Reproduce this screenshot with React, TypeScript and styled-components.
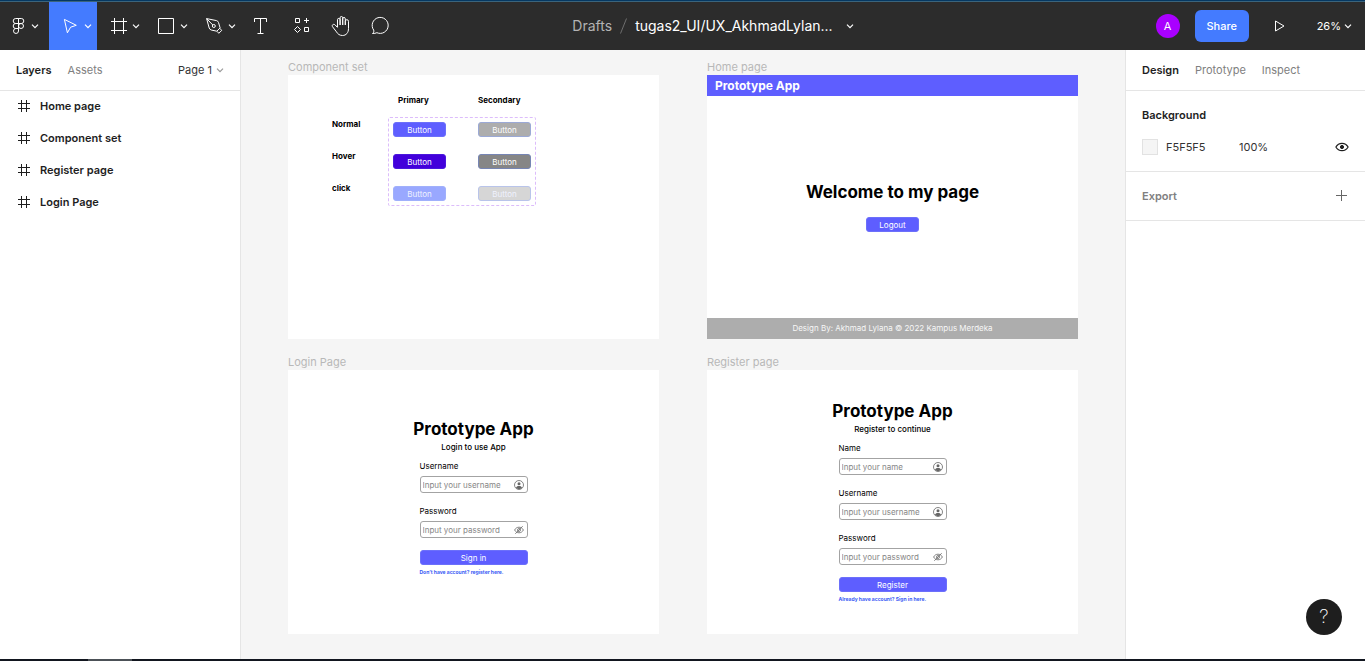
import React from "react";
import styled, { createGlobalStyle, css } from "styled-components";

const GlobalStyle = createGlobalStyle`
  *, *::before, *::after { box-sizing: border-box; }
  body { margin: 0; font-family: Inter, "Liberation Sans", sans-serif; font-size: 11px; line-height: 16px; color: #1e1e1e; }
  button, input { font: inherit; color: inherit; }
  h1, h2, h3, p, ul { margin: 0; padding: 0; }
  svg { display: block; flex: none; }
`;

/* ---------- shell ---------- */

const Shell = styled.div`
  display: flex;
  flex-direction: column;
  min-height: 100vh;
  background: #fff;
`;

const WindowEdge = styled.div`
  height: 2px;
  background: #053862;
  border-bottom: 1px solid #3b647c;
`;

const Taskbar = styled.div`
  height: 2px;
  padding-left: 88px;
  background: #12161f;
`;

const TaskbarItem = styled.div`
  width: 44px;
  height: 2px;
  background: #4c5157;
`;

const Workspace = styled.div`
  flex: 1;
  display: flex;
  align-items: stretch;
`;

/* ---------- toolbar ---------- */

const Toolbar = styled.header`
  display: flex;
  height: 48px;
  background: #2c2c2c;
  color: #fff;
`;

const Tools = styled.nav`
  display: flex;
  flex: none;
`;

const bareButton = css`
  display: flex;
  align-items: center;
  margin: 0;
  padding: 0;
  border: 0;
  background: none;
`;

const Tool = styled.button<{ $kind?: "menu" | "single" | "main"; $active?: boolean }>`
  ${bareButton}
  gap: 1px;
  width: ${(p) => (p.$kind === "single" ? 40 : p.$kind === "main" ? 49 : 48)}px;
  padding-left: ${(p) => (p.$kind === "single" ? 8 : p.$kind === "main" ? 6 : 10)}px;
  background: ${(p) => (p.$active ? "#447bff" : "transparent")};
`;

const FileTitle = styled.div`
  flex: 1;
  display: flex;
  align-items: center;
  justify-content: center;
  gap: 8px;
  min-width: 0;
  font-size: 14px;
  white-space: nowrap;
`;

const FolderLink = styled.a`
  color: #b3b3b3;
  text-decoration: none;
`;

const FileName = styled.button`
  ${bareButton}
  gap: 13px;
`;

const Actions = styled.div`
  display: flex;
  align-items: center;
  justify-content: flex-end;
  flex: none;
  width: 340px;
  padding-right: 13px;
`;

const Avatar = styled.span`
  display: grid;
  place-items: center;
  width: 24px;
  height: 24px;
  margin-right: 15px;
  border-radius: 50%;
  background: #a900ff;
`;

const ShareButton = styled.button`
  width: 54px;
  height: 32px;
  padding: 0;
  border: 0;
  border-radius: 6px;
  background: #447bff;
  font-weight: 500;
`;

const PlayButton = styled.button`
  ${bareButton}
  margin: 0 31px 0 25px;
`;

const ZoomButton = styled.button`
  ${bareButton}
  gap: 3px;
`;

/* ---------- side panels ---------- */

const LeftPanel = styled.aside`
  flex: none;
  width: 241px;
  border-right: 1px solid #e5e5e5;
`;

const RightPanel = styled.aside`
  flex: none;
  width: 240px;
  border-left: 1px solid #e5e5e5;
`;

const PanelTabs = styled.div`
  display: flex;
  align-items: center;
  gap: 16px;
  height: 40px;
  padding: 0 16px;
  box-shadow: 0 1px 0 #e5e5e5;
`;

const Tab = styled.button<{ $active?: boolean }>`
  ${bareButton}
  color: ${(p) => (p.$active ? "#1e1e1e" : "#808080")};
  font-weight: ${(p) => (p.$active ? 600 : 400)};
`;

const PagePicker = styled.button`
  ${bareButton}
  gap: 4px;
  margin-left: auto;
  color: #333;
`;

const LayerList = styled.ul`
  list-style: none;
`;

const Layer = styled.li`
  display: flex;
  align-items: center;
  gap: 10px;
  height: 32px;
  padding-left: 18px;
  font-weight: 600;
`;

const Section = styled.section`
  padding: 8px 16px;
  border-bottom: 1px solid #e5e5e5;
`;

const DesignSections = styled.div`
  padding-top: 1px;
`;

const Row = styled.div`
  display: flex;
  align-items: center;
  height: 32px;
`;

const SectionTitle = styled.h2<{ $muted?: boolean }>`
  flex: 1;
  font-size: 11px;
  font-weight: 600;
  color: ${(p) => (p.$muted ? "#808080" : "#1e1e1e")};
`;

const Swatch = styled.button`
  width: 16px;
  height: 16px;
  margin-right: 8px;
  padding: 0;
  border: 1px solid #e2e2e2;
  background: #f5f5f5;
`;

const ValueInput = styled.input<{ $w: number }>`
  width: ${(p) => p.$w}px;
  padding: 0;
  border: 0;
  outline: 0;
  background: none;
  color: #333;
`;

const IconButton = styled.button`
  ${bareButton}
  margin-left: auto;
`;

/* ---------- canvas ---------- */

const Canvas = styled.main`
  flex: 1;
  display: grid;
  grid-template-columns: 371px 371px;
  justify-content: center;
  align-content: start;
  column-gap: 48px;
  row-gap: 16px;
  padding: 10px 0 25px;
  background: #f5f5f5;
`;

const Artboard = styled.section`
  display: flex;
  flex-direction: column;
`;

const ArtboardName = styled.h2`
  font-size: 11px;
  line-height: 15px;
  font-weight: 400;
  color: #b8b8b8;
`;

const Sheet = styled.div`
  display: flex;
  flex-direction: column;
  height: 264px;
  background: #fff;
  color: #000;
`;

const VariantSheet = styled(Sheet)`
  display: grid;
  grid-template-columns: 56px 148px;
  grid-template-rows: 12px auto;
  align-content: start;
  row-gap: 11px;
  padding: 19px 0 0 44px;
  font-size: 8px;
  line-height: 12px;
  font-weight: 700;
`;

const VariantColumns = styled.div`
  grid-column: 2;
  display: grid;
  grid-template-columns: 80px auto;
  padding-left: 10px;
`;

const VariantStates = styled.div`
  display: flex;
  flex-direction: column;
  gap: 20px;
  padding-top: 1px;
`;

const VariantBox = styled.div`
  display: grid;
  grid-template-columns: 53px 53px;
  column-gap: 32px;
  row-gap: 17px;
  padding: 4px;
  border: 1px dashed #dcbcfb;
  border-radius: 2px;
`;

const ProtoButton = styled.button<{ $bg?: string; $edge?: string; $fade?: boolean }>`
  width: 53px;
  height: 15px;
  padding: 0;
  border: 1px solid ${(p) => p.$edge ?? "#6c70fa"};
  border-radius: 3px;
  background: ${(p) => p.$bg ?? "#5e5eff"};
  color: ${(p) => (p.$fade ? "#f0f2ff" : "#fff")};
  font-size: 8px;
  line-height: 12px;
  font-weight: 400;
`;

const AppHeader = styled.div`
  height: 21px;
  padding-left: 8px;
  background: #5e5eff;
  color: #fff;
  font-size: 12px;
  line-height: 21px;
  font-weight: 700;
`;

const Welcome = styled.div`
  flex: 1;
  display: flex;
  flex-direction: column;
  align-items: center;
  gap: 13px;
  padding-top: 84px;
`;

const Heading = styled.h1`
  font-size: 17px;
  line-height: 24px;
  font-weight: 700;
`;

const AppFooter = styled.div`
  height: 21px;
  background: #adadad;
  color: #f7f7f7;
  font-size: 8px;
  line-height: 21px;
  text-align: center;
`;

const AuthSheet = styled(Sheet)<{ $top: number }>`
  align-items: center;
  padding-top: ${(p) => p.$top}px;
  font-size: 8px;
  line-height: 12px;
`;

const Subtitle = styled.p`
  font-weight: 500;
`;

const AuthForm = styled.form`
  display: flex;
  flex-direction: column;
  gap: 12px;
  width: 108px;
  margin-top: 7px;
`;

const Field = styled.label`
  display: flex;
  flex-direction: column;
  gap: 4px;
`;

const InputShell = styled.span`
  display: flex;
  align-items: center;
  height: 17px;
  padding: 0 3px 0 2px;
  border: 1px solid #a3a3a3;
  border-radius: 3px;
`;

const TextInput = styled.input`
  flex: 1;
  min-width: 0;
  padding: 0;
  border: 0;
  outline: 0;
  background: none;
  font-size: 8px;
  line-height: 12px;
  &::placeholder { color: #868686; opacity: 1; }
`;

const SubmitButton = styled(ProtoButton)`
  width: 100%;
`;

const SwitchLink = styled.a`
  width: 108px;
  margin-top: 3px;
  color: #3a5cf5;
  font-size: 5px;
  line-height: 8px;
  font-weight: 700;
  text-decoration: none;
  white-space: nowrap;
`;

const HelpButton = styled.button`
  position: fixed;
  right: 23px;
  bottom: 26px;
  width: 36px;
  height: 36px;
  padding: 0;
  border: 0;
  border-radius: 50%;
  background: #1e1e1e;
  color: #fff;
  font-size: 19px;
  line-height: 36px;
  font-weight: 200;
`;

/* ---------- icons ---------- */

const Icon = ({ size = 24, children, color = "#fff" }: { size?: number; color?: string; children: React.ReactNode }) => (
  <svg width={size} height={size} viewBox={`0 0 ${size} ${size}`} fill="none" stroke={color} aria-hidden="true">
    {children}
  </svg>
);

const Chevron = ({ color = "#fff" }: { color?: string }) => (
  <Icon size={8} color={color}>
    <path d="M1 2.700 4 5.700 7 2.700" strokeWidth="1.200" />
  </Icon>
);

const FigmaIcon = () => (
  <Icon>
    <path d="M12.500 4.500H9.700a2.500 2.500 0 0 0 0 5h2.800zM12.500 4.500h2.800a2.500 2.500 0 0 1 0 5h-2.800zM12.500 9.500H9.700a2.500 2.500 0 0 0 0 5h2.800zM12.500 14.500H9.700a2.500 2.500 0 1 0 2.800 2.500z" />
    <circle cx="15" cy="12" r="2.500" />
  </Icon>
);

const MoveIcon = () => (
  <Icon>
    <path d="M5.400 5.400 17.300 11.300 11.600 13.200 8.400 18.800z" />
  </Icon>
);

const FrameIcon = () => (
  <Icon>
    <path d="M7.500 4v16M16.500 4v16M4 7.500h16M4 16.500h16" />
  </Icon>
);

const RectIcon = () => (
  <Icon>
    <path d="M3.500 4.500h15v15h-15z" />
  </Icon>
);

const PenIcon = () => (
  <Icon>
    <path d="M3.600 4.600 6.200 14c.3 1 1 1.700 2 2l5.600 1.200 3.300-3.300-1.600-5.400c-.3-1-1-1.600-2-1.900zM3.600 4.600l6.300 6.500M14.200 17.400l1.600 1.900 3-3-1.800-1.700" />
    <circle cx="10.800" cy="12" r="1.500" />
  </Icon>
);

const TypeIcon = () => (
  <Icon>
    <path d="M5.500 8V4.500h12V8M11.500 4.500v15M8.500 19.500h6" />
  </Icon>
);

const ResourcesIcon = () => (
  <Icon>
    <path d="M6.500 4.500h4v4h-4zM15.500 13.500h4v4h-4zM17.500 4v5M15 6.500h5M8.500 12.500l3 3-3 3-3-3z" />
  </Icon>
);

const HandIcon = () => (
  <Icon>
    <path d="M8.500 13V5.700a1.300 1.300 0 0 1 2.600 0V11M11.100 11V3.800a1.300 1.300 0 0 1 2.600 0V11M13.700 11V4.800a1.300 1.300 0 0 1 2.600 0V11M16.300 11V7.300a1.600 1.600 0 0 1 3.200 0v7.200c0 4.200-2.300 7-6 7-3 0-4.600-1.400-6-3.600l-4-5.200c-1-1.700 1-3.200 2.600-1.800l2.400 2.600" />
  </Icon>
);

const CommentIcon = () => (
  <Icon>
    <path d="M3.500 19.500c1.300-1 1.600-2 1.200-3.400a8 8 0 1 1 3.200 2.600c-1.200.6-2.600.8-4.400.8z" />
  </Icon>
);

const PlayIcon = () => (
  <Icon size={12}>
    <path d="M1.500 1v10l8.500-5z" />
  </Icon>
);

const HashIcon = () => (
  <Icon size={12} color="#1e1e1e">
    <path d="M3.500 0v12M8.500 0v12M0 3.500h12M0 8.500h12" />
  </Icon>
);

const EyeIcon = () => (
  <Icon size={14} color="#1e1e1e">
    <path d="M.9 7C2.300 4.500 4.500 3.300 7 3.300S11.700 4.500 13.100 7C11.700 9.500 9.500 10.700 7 10.700S2.300 9.500.9 7z" strokeWidth="1.200" />
    <circle cx="7" cy="7" r="1.600" fill="#1e1e1e" />
  </Icon>
);

const PlusIcon = () => (
  <Icon size={14} color="#666">
    <path d="M6.500 1v11M1 6.500h11" />
  </Icon>
);

const UserIcon = () => (
  <Icon size={10} color="#666">
    <circle cx="5" cy="5" r="4.500" strokeWidth=".8" />
    <circle cx="5" cy="3.800" r="1.500" fill="#666" stroke="none" />
    <path d="M1.900 7.800C2.600 6.500 3.700 6.100 5 6.100s2.400.4 3.100 1.700A4.300 4.300 0 0 1 5 9.200a4.300 4.300 0 0 1-3.100-1.400z" fill="#666" stroke="none" />
  </Icon>
);

const EyeOffIcon = () => (
  <Icon size={10} color="#666">
    <path d="M.6 5C1.600 3.100 3.200 2.200 5 2.200S8.400 3.100 9.400 5C8.400 6.900 6.800 7.800 5 7.800S1.600 6.900.6 5zM1.300 8.800l7.400-7.600" strokeWidth=".8" />
    <circle cx="5" cy="5" r="1.500" strokeWidth=".8" />
  </Icon>
);

const SlashIcon = () => (
  <svg width="7" height="16" viewBox="0 0 7 16" fill="none" stroke="#6e6e6e" aria-hidden="true">
    <path d="M6.500.5.500 15.500" />
  </svg>
);

/* ---------- data ---------- */

const layers = ["Home page", "Component set", "Register page", "Login Page"];

const tools = [
  { label: "Main menu", icon: <FigmaIcon />, kind: "main" },
  { label: "Move", icon: <MoveIcon />, kind: "menu", active: true },
  { label: "Frame", icon: <FrameIcon />, kind: "menu" },
  { label: "Rectangle", icon: <RectIcon />, kind: "menu" },
  { label: "Pen", icon: <PenIcon />, kind: "menu" },
  { label: "Text", icon: <TypeIcon />, kind: "single" },
  { label: "Resources", icon: <ResourcesIcon />, kind: "single" },
  { label: "Hand tool", icon: <HandIcon />, kind: "single" },
  { label: "Comment", icon: <CommentIcon />, kind: "single" },
] as const;

const variants = [
  { bg: "#5e5eff", edge: "#6c70fa" },
  { bg: "#adadad", edge: "#9ba9d6" },
  { bg: "#4200db", edge: "#4a18dc" },
  { bg: "#868686", edge: "#7685b4" },
  { bg: "#99a8ff", edge: "#a0b0fb", fade: true },
  { bg: "#d6d6d6", edge: "#b9c4ea", fade: true },
];

type AuthProps = {
  name: string;
  top: number;
  subtitle: string;
  fields: string[];
  action: string;
  link: string;
};

const AuthArtboard = ({ name, top, subtitle, fields, action, link }: AuthProps) => (
  <Artboard>
    <ArtboardName>{name}</ArtboardName>
    <AuthSheet $top={top}>
      <Heading>Prototype App</Heading>
      <Subtitle>{subtitle}</Subtitle>
      <AuthForm onSubmit={(e) => e.preventDefault()}>
        {fields.map((field) => (
          <Field key={field}>
            {field}
            <InputShell>
              <TextInput
                type={field === "Password" ? "password" : "text"}
                placeholder={`Input your ${field.toLowerCase()}`}
              />
              {field === "Password" ? <EyeOffIcon /> : <UserIcon />}
            </InputShell>
          </Field>
        ))}
        <SubmitButton type="submit">{action}</SubmitButton>
      </AuthForm>
      <SwitchLink href="#">{link}</SwitchLink>
    </AuthSheet>
  </Artboard>
);

export default function App() {
  return (
    <Shell>
      <GlobalStyle />
      <WindowEdge />
      <Toolbar>
        <Tools aria-label="Tools">
          {tools.map((tool) => (
            <Tool key={tool.label} aria-label={tool.label} $kind={tool.kind} $active={"active" in tool}>
              {tool.icon}
              {tool.kind !== "single" && <Chevron />}
            </Tool>
          ))}
        </Tools>
        <FileTitle>
          <FolderLink href="#">Drafts</FolderLink>
          <SlashIcon />
          <FileName>
            tugas2_UI/UX_AkhmadLylan...
            <Chevron />
          </FileName>
        </FileTitle>
        <Actions>
          <Avatar>A</Avatar>
          <ShareButton>Share</ShareButton>
          <PlayButton aria-label="Present">
            <PlayIcon />
          </PlayButton>
          <ZoomButton>
            26%
            <Chevron />
          </ZoomButton>
        </Actions>
      </Toolbar>

      <Workspace>
        <LeftPanel>
          <PanelTabs>
            <Tab $active>Layers</Tab>
            <Tab>Assets</Tab>
            <PagePicker>
              Page 1
              <Chevron color="#999" />
            </PagePicker>
          </PanelTabs>
          <LayerList>
            {layers.map((layer) => (
              <Layer key={layer}>
                <HashIcon />
                {layer}
              </Layer>
            ))}
          </LayerList>
        </LeftPanel>

        <Canvas>
          <Artboard>
            <ArtboardName>Component set</ArtboardName>
            <VariantSheet>
              <VariantColumns>
                <span>Primary</span>
                <span>Secondary</span>
              </VariantColumns>
              <VariantStates>
                <span>Normal</span>
                <span>Hover</span>
                <span>click</span>
              </VariantStates>
              <VariantBox>
                {variants.map((v) => (
                  <ProtoButton key={v.bg} $bg={v.bg} $edge={v.edge} $fade={v.fade}>
                    Button
                  </ProtoButton>
                ))}
              </VariantBox>
            </VariantSheet>
          </Artboard>

          <Artboard>
            <ArtboardName>Home page</ArtboardName>
            <Sheet>
              <AppHeader>Prototype App</AppHeader>
              <Welcome>
                <Heading>Welcome to my page</Heading>
                <ProtoButton>Logout</ProtoButton>
              </Welcome>
              <AppFooter>Design By: Akhmad Lylana © 2022 Kampus Merdeka</AppFooter>
            </Sheet>
          </Artboard>

          <AuthArtboard
            name="Login Page"
            top={47}
            subtitle="Login to use App"
            fields={["Username", "Password"]}
            action="Sign in"
            link="Don’t have account? register here."
          />
          <AuthArtboard
            name="Register page"
            top={29}
            subtitle="Register to continue"
            fields={["Name", "Username", "Password"]}
            action="Register"
            link="Already have account? Sign in here."
          />
        </Canvas>

        <RightPanel>
          <PanelTabs>
            <Tab $active>Design</Tab>
            <Tab>Prototype</Tab>
            <Tab>Inspect</Tab>
          </PanelTabs>
          <DesignSections>
            <Section>
              <Row>
                <SectionTitle>Background</SectionTitle>
              </Row>
              <Row>
                <Swatch aria-label="Background colour" />
                <ValueInput $w={73} aria-label="Colour value" defaultValue="F5F5F5" />
                <ValueInput $w={40} aria-label="Opacity" defaultValue="100%" />
                <IconButton aria-label="Toggle visibility">
                  <EyeIcon />
                </IconButton>
              </Row>
            </Section>
            <Section>
              <Row>
                <SectionTitle $muted>Export</SectionTitle>
                <IconButton aria-label="Add export">
                  <PlusIcon />
                </IconButton>
              </Row>
            </Section>
          </DesignSections>
        </RightPanel>
      </Workspace>

      <Taskbar>
        <TaskbarItem />
      </Taskbar>
      <HelpButton aria-label="Help">?</HelpButton>
    </Shell>
  );
}
